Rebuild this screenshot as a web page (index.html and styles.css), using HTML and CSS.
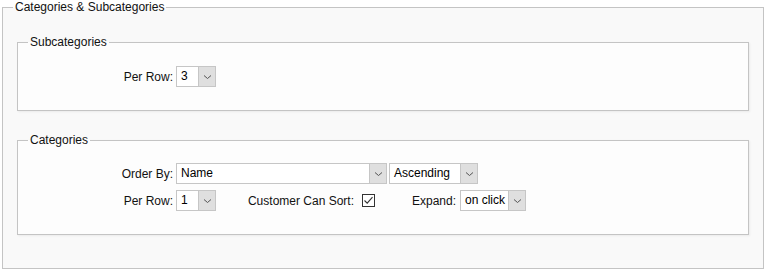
FILE: index.html
```html
<!DOCTYPE html>
<html>
<head>
<meta charset="utf-8">
<link rel="stylesheet" href="styles.css">
</head>
<body>
<fieldset class="box outer">
  <legend>Categories &amp; Subcategories</legend>
  <fieldset class="box group sub">
    <legend>Subcategories</legend>
    <div class="row">
      <span class="lbl">Per Row:</span>
      <span class="sel w-small"><span class="val">3</span><span class="arrow"><svg width="9" height="6" viewBox="0 0 9 6"><path d="M1 1.5 L4.5 4.5 L8 1.5" fill="none" stroke="#555" stroke-width="1"/></svg></span></span>
    </div>
  </fieldset>
  <fieldset class="box group cat">
    <legend>Categories</legend>
    <div class="row">
      <span class="lbl">Order By:</span>
      <span class="sel w-name"><span class="val">Name</span><span class="arrow"><svg width="9" height="6" viewBox="0 0 9 6"><path d="M1 1.5 L4.5 4.5 L8 1.5" fill="none" stroke="#555" stroke-width="1"/></svg></span></span>
      <span class="sel w-asc"><span class="val">Ascending</span><span class="arrow"><svg width="9" height="6" viewBox="0 0 9 6"><path d="M1 1.5 L4.5 4.5 L8 1.5" fill="none" stroke="#555" stroke-width="1"/></svg></span></span>
    </div>
    <div class="row row2">
      <span class="lbl">Per Row:</span>
      <span class="sel w-small"><span class="val">1</span><span class="arrow"><svg width="9" height="6" viewBox="0 0 9 6"><path d="M1 1.5 L4.5 4.5 L8 1.5" fill="none" stroke="#555" stroke-width="1"/></svg></span></span>
      <span class="lbl lbl-sort">Customer Can Sort:</span>
      <span class="check"><svg width="11" height="11" viewBox="0 0 11 11"><path d="M1.5 5.5 L4.2 8.2 L9.5 2.2" fill="none" stroke="#333" stroke-width="1.1"/></svg></span>
      <span class="lbl lbl-expand">Expand:</span>
      <span class="sel w-click"><span class="val">on click</span><span class="arrow"><svg width="9" height="6" viewBox="0 0 9 6"><path d="M1 1.5 L4.5 4.5 L8 1.5" fill="none" stroke="#555" stroke-width="1"/></svg></span></span>
    </div>
  </fieldset>
</fieldset>
</body>
</html>
```

FILE: styles.css
```css
html, body {
  margin: 0;
  padding: 0;
  background: #ffffff;
}
body {
  font-family: "Liberation Sans", Arial, sans-serif;
  font-size: 12px;
  color: #111;
}
.box {
  border: 1px solid #c4c4c4;
  margin: 0;
  min-width: 0;
}
.box legend {
  padding: 0 2px;
  margin-left: -4px;
  line-height: 14px;
  color: #111;
}
.outer {
  margin: 0 2px;
  padding: 0 14px 33px 14px;
  background: #f9f9f9;
}
.group {
  background: #fdfdfd;
  box-shadow: 1px 1px 2px rgba(0, 0, 0, 0.06);
  padding: 0 14px;
}
.sub {
  margin-top: 21px;
  padding-top: 17px;
  padding-bottom: 23px;
}
.cat {
  margin-top: 22px;
  padding-top: 16px;
  padding-bottom: 23px;
}
.row {
  display: flex;
  align-items: center;
  height: 21px;
}
.row2 {
  margin-top: 6px;
}
.lbl {
  width: 141px;
  text-align: right;
  flex: none;
  margin-right: 3px;
}
.lbl-sort {
  width: 138px;
  margin-right: 8px;
}
.lbl-expand {
  width: 81px;
  margin-left: 0;
  margin-right: 4px;
}
.sel {
  display: flex;
  height: 21px;
  box-sizing: border-box;
  border: 1px solid #c6c6c6;
  background: #ffffff;
  flex: none;
  margin-right: 2px;
}
.sel .val {
  flex: 1;
  padding-left: 4px;
  line-height: 19px;
  white-space: nowrap;
  overflow: hidden;
  color: #000;
}
.sel .arrow {
  width: 16px;
  flex: none;
  border-left: 1px solid #c6c6c6;
  background: #dfdfdf;
  display: flex;
  align-items: center;
  justify-content: center;
}
.w-small { width: 40px; margin-right: 0; }
.w-name { width: 211px; }
.w-asc { width: 89px; }
.w-click { width: 66px; }
.check {
  width: 13px;
  height: 13px;
  box-sizing: border-box;
  border: 1px solid #333;
  background: #fff;
  display: flex;
  align-items: center;
  justify-content: center;
  flex: none;
}
```
